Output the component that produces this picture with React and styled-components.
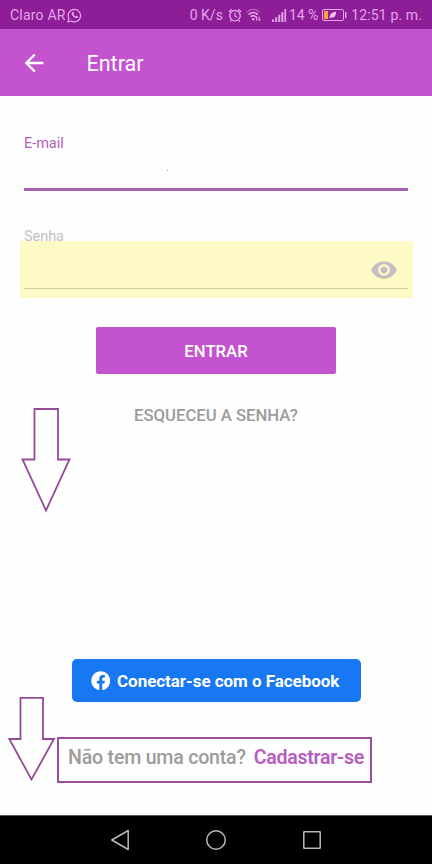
import { useState } from 'react';
import styled, { createGlobalStyle } from 'styled-components';
import { MdArrowBack, MdVisibility } from 'react-icons/md';
import { FaFacebook } from 'react-icons/fa';

const GlobalStyle = createGlobalStyle`
	* {
		box-sizing: border-box;
	}

	body {
		margin: 0;
		background: #fefefe;
		font-family: Roboto, sans-serif;
	}

	button {
		border: none;
		padding: 0;
		background: none;
		font-family: inherit;
	}

	svg {
		display: block;
		flex: none;
	}
`;

const WhatsappIcon = () => (
	<svg width='15' height='15' viewBox='0 0 15 15' fill='none' stroke='currentColor'>
		<path
			d='M1 14l.9-3.5A6.2 6.2 0 1 1 4.3 13z'
			strokeWidth='1.3'
			strokeLinejoin='round'
		/>
		<path
			d='M5 4.2c-1.5 2.500 2.700 6.900 5.600 5.600.8-.6.6-1.300.2-1.600l-1.300-.6-.9.8C7.600 8 6.900 7.200 6.500 6.300l.7-.9L6.500 3.900z'
			fill='currentColor'
			stroke='none'
		/>
	</svg>
);

const AlarmIcon = () => (
	<svg width='14' height='15' viewBox='0 0 14 15' fill='none' stroke='currentColor'>
		<circle cx='7' cy='7.7' r='5.2' strokeWidth='1.4' />
		<path d='M7 4.800v3.200l2 1.500' strokeWidth='1.2' />
		<path d='M.8 4L3.700 1.200M13.200 4L10.300 1.200' strokeWidth='1.3' />
		<path d='M3.400 12.200l-1.200 1.500M10.600 12.200l1.200 1.500' strokeWidth='1.2' />
	</svg>
);

const WifiIcon = () => (
	<svg width='16' height='14' viewBox='0 0 16 14' fill='none' stroke='currentColor'>
		<path d='M.8 4.300C4.500.5 10 .5 13.700 4.300' strokeWidth='1.3' opacity='.5' />
		<path d='M2.600 6.600c2.800-2.700 6.500-2.700 9.300 0' strokeWidth='1.6' />
		<path d='M4.700 8.900c1.600-1.500 3.600-1.500 5.100 0' strokeWidth='1.6' />
		<circle cx='7.300' cy='11.200' r='1.300' fill='currentColor' stroke='none' />
		<path d='M10.700 12.500V8.600M13.200 8.800v3.900' strokeWidth='1.2' />
		<path d='M9.600 9.900l1.100-1.300M14.300 11.400l-1.100 1.300' strokeWidth='1' />
	</svg>
);

const SignalIcon = () => (
	<svg width='15' height='13' viewBox='0 0 15 13' fill='currentColor'>
		<rect x='0' y='10.500' width='2' height='2.500' />
		<rect x='3.100' y='8.300' width='2' height='4.700' />
		<rect x='6.200' y='5.800' width='2' height='7.200' />
		<rect x='9.300' y='3.100' width='2' height='9.900' />
		<rect x='12.400' y='0' width='1.700' height='13' />
	</svg>
);

const BatteryIcon = () => (
	<svg width='25' height='12' viewBox='0 0 25 12' fill='none'>
		<rect x='.5' y='.5' width='21' height='11' rx='1.500' stroke='currentColor' />
		<rect x='2' y='2' width='4' height='8' fill='#ff9f3f' />
		<path
			d='M7.800 9.400c-.7-3.600 1.400-6.200 6.200-6.700.1 3.900-1.800 6.400-4.900 5.800z'
			fill='#f0c4f4'
		/>
		<rect x='23' y='3' width='1.500' height='6' fill='currentColor' />
	</svg>
);

const DownArrow = ({ width, height, points }) => (
	<svg
		width={width}
		height={height}
		viewBox={`0 0 ${width} ${height}`}
		fill='#fefefe'
		stroke='#934b98'
		strokeWidth='1.8'
	>
		<polygon points={points} />
	</svg>
);

const App = () => {
	const [email, setEmail] = useState('');
	const [password, setPassword] = useState('');
	const [visible, setVisible] = useState(false);

	const emailChangeHandler = (event) => {
		setEmail(event.target.value);
	};

	const passwordChangeHandler = (event) => {
		setPassword(event.target.value);
	};

	const toggleVisibleHandler = () => {
		setVisible(!visible);
	};

	return (
		<Screen>
			<GlobalStyle />
			<StatusBar>
				<Carrier>
					<StatusText $spacing='0.2px'>Claro AR</StatusText>
					<WhatsappIcon />
				</Carrier>
				<StatusText>0 K/s</StatusText>
				<StatusIcon $left={5}>
					<AlarmIcon />
				</StatusIcon>
				<StatusIcon $left={4}>
					<WifiIcon />
				</StatusIcon>
				<StatusIcon $left={10}>
					<SignalIcon />
				</StatusIcon>
				<StatusText $left={2}>14 %</StatusText>
				<StatusIcon $left={4}>
					<BatteryIcon />
				</StatusIcon>
				<StatusText $left={4} $spacing='0.12px'>
					12:51 p. m.
				</StatusText>
			</StatusBar>

			<Header>
				<MdArrowBack size={28} />
				<Title>Entrar</Title>
			</Header>

			<Form>
				<EmailField>
					<Label htmlFor='email' $active>
						E-mail
					</Label>
					<Input id='email' type='text' value={email} onChange={emailChangeHandler} />
					<Speck />
				</EmailField>

				<Label htmlFor='senha'>Senha</Label>
				<Highlight>
					<PasswordRow>
						<Input
							id='senha'
							type={visible ? 'text' : 'password'}
							value={password}
							onChange={passwordChangeHandler}
						/>
						<EyeButton type='button' onClick={toggleVisibleHandler}>
							<MdVisibility size={28} />
						</EyeButton>
					</PasswordRow>
				</Highlight>

				<SubmitButton type='button'>ENTRAR</SubmitButton>
				<ForgotButton type='button'>ESQUECEU A SENHA?</ForgotButton>

				<FacebookButton type='button'>
					<FaFacebook size={19.5} />
					<span>Conectar-se com o Facebook</span>
				</FacebookButton>

				<SignUpBox>
					<Question>Não tem uma conta?</Question>
					<SignUpLink>Cadastrar-se</SignUpLink>
				</SignUpBox>
			</Form>

			<NavBar>
				<svg width='20' height='22' viewBox='0 0 20 22'>
					<path d='M18.200 1.500v19L1.800 11z' />
				</svg>
				<svg width='22' height='22' viewBox='0 0 22 22'>
					<circle cx='11' cy='11' r='9.300' />
				</svg>
				<svg width='20' height='20' viewBox='0 0 20 20'>
					<rect x='1.800' y='1.800' width='16.400' height='16.400' rx='.5' />
				</svg>
			</NavBar>

			<Pointer $top={407} $left={21}>
				<DownArrow
					width={51}
					height={106}
					points='13.500,2 37,2 37,52.500 48.500,52.500 25,103.500 1.500,52.500 13.500,52.500'
				/>
			</Pointer>
			<Pointer $top={696} $left={7}>
				<DownArrow
					width={49}
					height={87}
					points='13.500,1.800 36,1.800 36,43 47,43 24.500,83.500 2.300,43 13.500,43'
				/>
			</Pointer>
		</Screen>
	);
};

export default App;

const Screen = styled.div`
	position: relative;
	display: flex;
	flex-direction: column;
	width: 432px;
	height: 864px;
	overflow: hidden;
	background: #fefefe;
`;

const StatusBar = styled.div`
	display: flex;
	align-items: center;
	height: 29px;
	padding: 1px 10px 0 10px;
	background: #8e1d98;
	color: #e3a5e8;
`;

const Carrier = styled.div`
	display: flex;
	align-items: center;
	gap: 1px;
	margin-right: auto;
`;

const StatusText = styled.span`
	margin-left: ${(props) => props.$left || 0}px;
	font-size: 14px;
	line-height: 16px;
	letter-spacing: ${(props) => props.$spacing || '0'};
	white-space: nowrap;
`;

const StatusIcon = styled.span`
	margin-left: ${(props) => props.$left}px;
`;

const Header = styled.header`
	display: flex;
	align-items: center;
	height: 67px;
	padding-left: 20px;
	background: #c353ce;
	color: #fff;
`;

const Title = styled.h1`
	margin: 2px 0 0 38.500px;
	font-size: 21.5px;
	font-weight: 400;
	line-height: 26px;
`;

const Form = styled.form`
	display: flex;
	flex: 1;
	flex-direction: column;
	padding: 39px 24px 0;
`;

const EmailField = styled.div`
	position: relative;
	display: flex;
	flex-direction: column;
	height: 56px;
	margin-bottom: 37px;
	border-bottom: 3px solid #a95fb0;
`;

const Label = styled.label`
	font-size: 14.5px;
	line-height: 18px;
	letter-spacing: -0.05px;
	color: ${(props) => (props.$active ? '#b35fba' : '#c2c2c2')};
`;

const Input = styled.input`
	flex: 1;
	min-width: 0;
	padding: 0;
	border: none;
	outline: none;
	background: none;
	font-size: 16px;
`;

const Speck = styled.i`
	position: absolute;
	top: 35px;
	left: 143px;
	width: 1px;
	height: 1px;
	background: #999;
`;

const Highlight = styled.div`
	height: 57px;
	margin: -5px -5px 0 -4px;
	padding: 0 5px 9px 4px;
	background: #fefac5;
`;

const PasswordRow = styled.div`
	display: flex;
	align-items: center;
	height: 48px;
	padding: 11px 10px 0 0;
	border-bottom: 1px solid #cfcba1;
`;

const EyeButton = styled.button`
	color: #c4bfc0;
`;

const SubmitButton = styled.button`
	align-self: center;
	width: 240px;
	height: 47px;
	margin-top: 29px;
	padding-top: 2px;
	border-radius: 2px;
	background: #c353ce;
	color: #fff;
	font-size: 16.7px;
	font-weight: 500;
`;

const ForgotButton = styled.button`
	align-self: center;
	margin-top: 32px;
	color: #9c9c9c;
	font-size: 16.7px;
	font-weight: 500;
	line-height: 20px;
`;

const FacebookButton = styled.button`
	display: flex;
	align-items: center;
	align-self: center;
	gap: 7px;
	width: 289px;
	height: 43px;
	margin-top: 233px;
	padding-left: 19px;
	border-radius: 5px;
	background: #1877f2;
	color: #fff;
	font-size: 17px;
	font-weight: 700;
	letter-spacing: -0.04px;
	white-space: nowrap;
`;

const SignUpBox = styled.div`
	display: flex;
	gap: 8px;
	width: 315px;
	height: 46px;
	margin: 35px 0 0 33px;
	padding: 8px 0 0 9px;
	border: 2px solid #9a529f;
	font-size: 19.6px;
	font-weight: 500;
	line-height: 22px;
	letter-spacing: -0.22px;
	white-space: nowrap;
`;

const Question = styled.span`
	color: #9c9c9c;
`;

const SignUpLink = styled.a`
	color: #b65dbd;
	font-weight: 600;
	letter-spacing: -0.28px;
`;

const NavBar = styled.nav`
	display: flex;
	align-items: center;
	justify-content: center;
	gap: 75px;
	height: 49px;
	border-top: 1px solid #555;
	background: #000;

	svg {
		fill: none;
		stroke: #b9b9b9;
		stroke-width: 1.5;
		stroke-linejoin: round;
	}
`;

/* callout arrows drawn over the form */
const Pointer = styled.div`
	position: absolute;
	top: ${(props) => props.$top}px;
	left: ${(props) => props.$left}px;
`;
